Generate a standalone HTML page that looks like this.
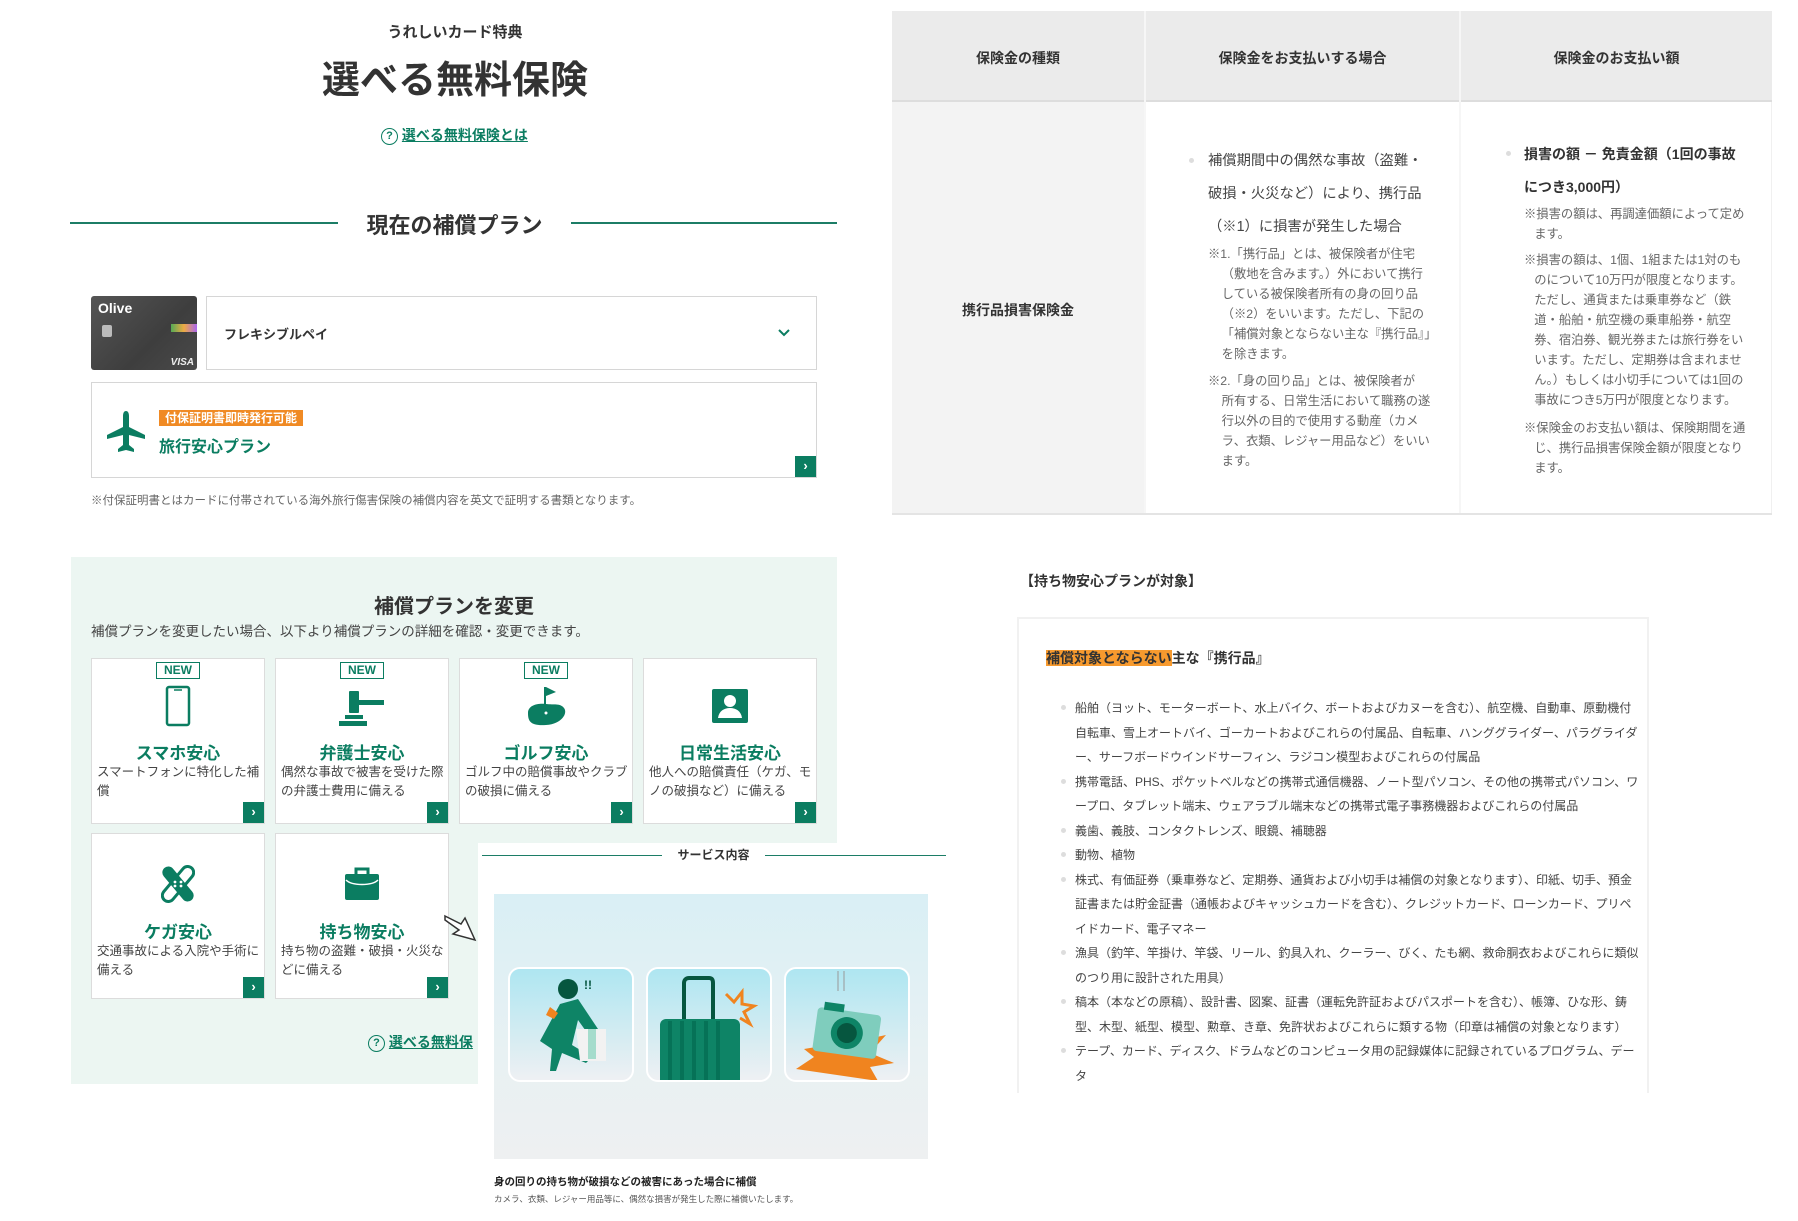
<!DOCTYPE html>
<html><head><meta charset="utf-8">
<style>
*{margin:0;padding:0;box-sizing:border-box}
body{width:1798px;height:1221px;background:#fff;position:relative;overflow:hidden;font-family:"Liberation Sans","Noto Sans CJK JP",sans-serif;color:#333}
.a{position:absolute}
.g{color:#0b7d61}
.c{text-align:center}
.b{font-weight:700}
.card{position:absolute;background:#fff;border:1px solid #dcdcdc}
.card .new{position:absolute;left:50%;margin-left:-22px;top:3px;width:44px;height:17px;border:1.5px solid #0b7d61;color:#0b7d61;font-size:12px;font-weight:700;text-align:center;line-height:14px}
.card .ic{position:absolute;left:0;right:0;top:26px;height:42px;display:flex;justify-content:center}
.card .t{position:absolute;left:0;right:0;top:80px;text-align:center;color:#0b7d61;font-size:17px;font-weight:700}
.card .d{position:absolute;left:5px;right:3px;top:104px;font-size:12.5px;line-height:19px;color:#444}
.arr{position:absolute;right:0;bottom:0;width:21px;height:21px;background:#0b7d61;color:#fff;font-size:13px;font-weight:700;text-align:center;line-height:20px}
.note{position:absolute;font-size:12.3px;line-height:20px;color:#666;white-space:nowrap}
ul.li{list-style:none}
ul.li li{position:relative;font-size:12px;line-height:24.5px;color:#444;white-space:nowrap}
ul.li li:before{content:"";position:absolute;left:-14px;top:9px;width:5px;height:5px;border-radius:50%;background:#ddd}
.dot{position:absolute;width:5px;height:5px;border-radius:50%;background:#ddd}
</style></head><body>

<div class="a c b" style="left:0;width:910px;top:21px;font-size:15px;color:#333">うれしいカード特典</div>
<div class="a c b" style="left:0;width:910px;top:49px;font-size:38px;color:#333">選べる無料保険</div>
<div class="a" style="left:381px;top:125px;font-size:14px;font-weight:700"><span style="display:inline-block;width:17px;height:17px;border:1.5px solid #0b7d61;border-radius:50%;color:#0b7d61;font-size:11px;text-align:center;line-height:14px;vertical-align:middle">?</span> <a class="g" style="text-decoration:underline">選べる無料保険とは</a></div>

<div class="a" style="left:70px;top:222px;width:268px;height:2px;background:#1c7d66"></div>
<div class="a" style="left:571px;top:222px;width:266px;height:2px;background:#1c7d66"></div>
<div class="a c b" style="left:338px;width:233px;top:208px;font-size:22px;color:#333">現在の補償プラン</div>

<div class="a" style="left:91px;top:296px;width:106px;height:74px;border-radius:3px;background:linear-gradient(135deg,#555 0%,#3e3e3e 60%,#4a4a4a 100%)">
 <div class="a b" style="left:7px;top:4px;color:#fff;font-size:14px">Olive</div>
 <div class="a" style="left:11px;top:29px;width:10px;height:12px;background:#bbb;border-radius:2px"></div>
 <div class="a" style="left:80px;top:28px;width:26px;height:8px;background:linear-gradient(90deg,#5a5,#ea4,#a6e)"></div>
 <div class="a b" style="right:3px;bottom:2px;color:#eee;font-size:10px;font-style:italic">VISA</div>
</div>
<div class="a" style="left:206px;top:296px;width:611px;height:74px;border:1px solid #d6d6d6">
 <div class="a b" style="left:17px;top:27px;font-size:13px">フレキシブルペイ</div>
 <svg class="a" style="right:25px;top:31px" width="14" height="10" viewBox="0 0 14 10"><path d="M2 2l5 5 5-5" fill="none" stroke="#0b7d61" stroke-width="2"/></svg>
</div>
<div class="a" style="left:91px;top:382px;width:726px;height:96px;border:1px solid #d6d6d6">
 <svg class="a" style="left:14px;top:28px" width="40" height="44" viewBox="0 0 40 44"><path d="M20 0c2 0 3 2 3 5v11l16 8v4l-16-4v10l5 4v3l-8-2-8 2v-3l5-4V24L1 28v-4l16-8V5c0-3 1-5 3-5z" fill="#0b7d61"/></svg>
 <div class="a b" style="left:67px;top:27px;background:#f08a24;color:#fff;font-size:12px;padding:0 6px;line-height:16px">付保証明書即時発行可能</div>
 <div class="a b g" style="left:67px;top:50px;font-size:16px">旅行安心プラン</div>
 <div class="arr">›</div>
</div>
<div class="a" style="left:91px;top:492px;font-size:11.5px;color:#666">※付保証明書とはカードに付帯されている海外旅行傷害保険の補償内容を英文で証明する書類となります。</div>

<!-- green change section -->
<div class="a" style="left:71px;top:557px;width:766px;height:527px;background:#ecf6f2"></div>
<div class="a c b" style="left:71px;width:766px;top:590px;font-size:20px;color:#333">補償プランを変更</div>
<div class="a" style="left:91px;top:620px;font-size:13.5px;color:#444">補償プランを変更したい場合、以下より補償プランの詳細を確認・変更できます。</div>

<div class="card" style="left:91px;top:658px;width:174px;height:166px"><div class="new">NEW</div><div class="ic"><svg width="26" height="42" viewBox="0 0 26 42"><rect x="2" y="2" width="22" height="38" rx="2" fill="none" stroke="#0b7d61" stroke-width="2.5"/><path d="M9 5h8" stroke="#0b7d61" stroke-width="1.5"/></svg></div><div class="t">スマホ安心</div><div class="d">スマートフォンに特化した補償</div><div class="arr">›</div></div>
<div class="card" style="left:275px;top:658px;width:174px;height:166px"><div class="new">NEW</div><div class="ic"><svg width="46" height="42" viewBox="0 0 46 42"><rect x="10" y="6" width="10" height="22" rx="1" fill="#0b7d61"/><rect x="20" y="15" width="25" height="5" fill="#0b7d61"/><rect x="6" y="30" width="18" height="4" fill="#0b7d61"/><rect x="0" y="36" width="28" height="5" fill="#0b7d61"/></svg></div><div class="t">弁護士安心</div><div class="d">偶然な事故で被害を受けた際の弁護士費用に備える</div><div class="arr">›</div></div>
<div class="card" style="left:459px;top:658px;width:174px;height:166px"><div class="new">NEW</div><div class="ic"><svg width="44" height="42" viewBox="0 0 44 42"><path d="M21 2v18" stroke="#0b7d61" stroke-width="2"/><path d="M22 2l10 5-10 4z" fill="#0b7d61"/><path d="M4 28c0-8 10-10 18-9s14-1 18 4-2 16-18 17S4 36 4 28z" fill="#0b7d61"/><circle cx="22" cy="28" r="1.5" fill="#fff"/></svg></div><div class="t">ゴルフ安心</div><div class="d">ゴルフ中の賠償事故やクラブの破損に備える</div><div class="arr">›</div></div>
<div class="card" style="left:643px;top:658px;width:174px;height:166px"><div class="ic"><svg width="36" height="42" viewBox="0 0 36 42"><rect x="0" y="4" width="36" height="34" rx="2" fill="#0b7d61"/><circle cx="18" cy="16" r="6" fill="#fff"/><path d="M6 33c1-7 6-10 12-10s11 3 12 10z" fill="#fff"/></svg></div><div class="t">日常生活安心</div><div class="d">他人への賠償責任（ケガ、モノの破損など）に備える</div><div class="arr">›</div></div>
<div class="card" style="left:91px;top:833px;width:174px;height:166px"><div class="ic" style="top:30px"><svg width="34" height="40" viewBox="0 0 34 40"><g transform="rotate(40 17 20)"><rect x="11" y="-1" width="12" height="42" rx="6" fill="#fff" stroke="#0b7d61" stroke-width="3"/></g><g transform="rotate(-40 17 20)"><rect x="11" y="-1" width="12" height="42" rx="6" fill="#0b7d61"/></g><circle cx="14" cy="18" r="1.4" fill="#fff"/><circle cx="20" cy="22" r="1.4" fill="#fff"/><circle cx="20" cy="18" r="1.4" fill="#fff"/><circle cx="14" cy="22" r="1.4" fill="#fff"/></svg></div><div class="t" style="top:84px">ケガ安心</div><div class="d" style="top:108px">交通事故による入院や手術に備える</div><div class="arr">›</div></div>
<div class="card" style="left:275px;top:833px;width:174px;height:166px"><div class="ic" style="top:30px"><svg width="36" height="42" viewBox="0 0 36 42"><path d="M12 10V5h12v5" fill="none" stroke="#0b7d61" stroke-width="3"/><rect x="1" y="10" width="34" height="26" rx="2" fill="#0b7d61"/><path d="M2 16c6 6 26 6 32 0" fill="none" stroke="#fff" stroke-width="1.5"/></svg></div><div class="t" style="top:84px">持ち物安心</div><div class="d" style="top:108px">持ち物の盗難・破損・火災などに備える</div><div class="arr">›</div></div>

<svg class="a" style="left:443px;top:910px" width="36" height="34" viewBox="0 0 36 34"><path d="M2 6l16 8 4-6 10 22-22-6 6-4-14-10z" fill="#fff" stroke="#333" stroke-width="1.5"/></svg>

<div class="a" style="left:368px;top:1032px;font-size:14px;font-weight:700"><span style="display:inline-block;width:17px;height:17px;border:1.5px solid #0b7d61;border-radius:50%;color:#0b7d61;font-size:11px;text-align:center;line-height:14px;vertical-align:middle">?</span> <a class="g" style="text-decoration:underline">選べる無料保</a></div>

<!-- service panel -->
<div class="a" style="left:478px;top:843px;width:470px;height:378px;background:#fff"></div>
<div class="a" style="left:482px;top:855px;width:180px;height:1px;background:#1c7d66"></div>
<div class="a" style="left:765px;top:855px;width:181px;height:1px;background:#1c7d66"></div>
<div class="a c b" style="left:662px;width:103px;top:846px;font-size:12px">サービス内容</div>
<div class="a" style="left:494px;top:894px;width:434px;height:265px;background:linear-gradient(180deg,#d9eff5 0%,#e8f1f3 60%,#eef0f1 100%)"></div>
<div class="a" style="left:508px;top:967px;width:126px;height:115px;border:2px solid #fff;border-radius:12px;background:linear-gradient(180deg,#aee6f1,#eef0f3);overflow:hidden">
 <svg width="122" height="111" viewBox="0 0 122 111"><circle cx="58" cy="20" r="10" fill="#06563f"/><path d="M50 35l18-5 20 30-10 5-10-14-6 25 20 12-6 6-24-10-6 18h-6l2-22-12-8z" fill="#0e8466"/><path d="M66 60h30v32H70z" fill="#f2f2f2"/><path d="M78 60h8v30h-8z" fill="#a5dccc"/><path d="M40 38l8 6-4 6-8-4z" fill="#f0841f"/><text x="74" y="20" font-size="12" fill="#06563f" font-weight="700">!!</text></svg>
</div>
<div class="a" style="left:646px;top:967px;width:126px;height:115px;border:2px solid #fff;border-radius:12px;background:linear-gradient(180deg,#aee6f1,#eef0f3);overflow:hidden">
 <svg width="122" height="111" viewBox="0 0 122 111"><path d="M36 50V14c0-3 2-5 5-5h20c3 0 4 2 4 5v36" fill="none" stroke="#06563f" stroke-width="4"/><rect x="12" y="50" width="80" height="70" rx="6" fill="#0e8466"/><path d="M22 52v60M34 52v60M46 52v60M58 52v60M70 52v60" stroke="#067257" stroke-width="4"/><path d="M78 25l8 8 8-10 0 12 12 2-10 6 6 12-10-6" fill="none" stroke="#f0841f" stroke-width="3"/></svg>
</div>
<div class="a" style="left:784px;top:967px;width:126px;height:115px;border:2px solid #fff;border-radius:12px;background:linear-gradient(180deg,#aee6f1,#eef0f3);overflow:hidden">
 <svg width="122" height="111" viewBox="0 0 122 111"><path d="M10 100l18-12-10-8 24-4 20-20 10 16 28-6-16 18 24 10-24 4 8 14z" fill="#f0841f"/><g transform="rotate(8 60 70)"><rect x="28" y="42" width="64" height="44" rx="4" fill="#7fcdbd"/><rect x="34" y="36" width="20" height="8" fill="#0e8466"/><circle cx="60" cy="64" r="16" fill="#0e8466"/><circle cx="60" cy="64" r="10" fill="#06563f"/></g><path d="M52 2v20M58 2v20" stroke="#999" stroke-width="1"/></svg>
</div>
<div class="a b" style="left:494px;top:1174px;font-size:10.5px;color:#222">身の回りの持ち物が破損などの被害にあった場合に補償</div>
<div class="a" style="left:494px;top:1193px;font-size:8.5px;color:#555">カメラ、衣類、レジャー用品等に、偶然な損害が発生した際に補償いたします。</div>

<!-- table -->
<div class="a" style="left:892px;top:11px;width:880px;height:91px;background:#ebebeb;border-bottom:2px solid #ddd"></div>
<div class="a" style="left:892px;top:102px;width:252px;height:412px;background:#f3f3f3"></div>
<div class="a" style="left:1144px;top:11px;width:2px;height:504px;background:#f6f6f6"></div>
<div class="a" style="left:1459px;top:11px;width:2px;height:504px;background:#f6f6f6"></div>
<div class="a" style="left:1771px;top:102px;width:1px;height:412px;background:#f0f0f0"></div>
<div class="a" style="left:892px;top:513px;width:880px;height:2px;background:#e4e4e4"></div>
<div class="a c b" style="left:892px;width:252px;top:48px;font-size:14px">保険金の種類</div>
<div class="a c b" style="left:1146px;width:313px;top:48px;font-size:14px">保険金をお支払いする場合</div>
<div class="a c b" style="left:1461px;width:311px;top:48px;font-size:14px">保険金のお支払い額</div>
<div class="a c b" style="left:892px;width:252px;top:300px;font-size:14px">携行品損害保険金</div>

<div class="dot" style="left:1189px;top:158px"></div>
<div class="a" style="left:1208px;top:145px;font-size:14.3px;line-height:33px;color:#444;white-space:nowrap">補償期間中の偶然な事故（盗難・<br>破損・火災など）により、携行品<br>（※1）に損害が発生した場合</div>
<div class="note" style="left:1208px;top:244px">※1.「携行品」とは、被保険者が住宅<br>&nbsp;&nbsp;&nbsp;&nbsp;（敷地を含みます。）外において携行<br>&nbsp;&nbsp;&nbsp;&nbsp;している被保険者所有の身の回り品<br>&nbsp;&nbsp;&nbsp;&nbsp;（※2）をいいます。ただし、下記の<br>&nbsp;&nbsp;&nbsp;&nbsp;「補償対象とならない主な『携行品』」<br>&nbsp;&nbsp;&nbsp;&nbsp;を除きます。</div>
<div class="note" style="left:1208px;top:371px">※2.「身の回り品」とは、被保険者が<br>&nbsp;&nbsp;&nbsp;&nbsp;所有する、日常生活において職務の遂<br>&nbsp;&nbsp;&nbsp;&nbsp;行以外の目的で使用する動産（カメ<br>&nbsp;&nbsp;&nbsp;&nbsp;ラ、衣類、レジャー用品など）をいい<br>&nbsp;&nbsp;&nbsp;&nbsp;ます。</div>

<div class="dot" style="left:1506px;top:151px"></div>
<div class="a b" style="left:1524px;top:138px;font-size:14px;line-height:33px;color:#333;white-space:nowrap">損害の額 － 免責金額（1回の事故<br>につき3,000円）</div>
<div class="note" style="left:1524px;top:204px">※損害の額は、再調達価額によって定め<br>&nbsp;&nbsp;&nbsp;ます。</div>
<div class="note" style="left:1524px;top:250px">※損害の額は、1個、1組または1対のも<br>&nbsp;&nbsp;&nbsp;のについて10万円が限度となります。<br>&nbsp;&nbsp;&nbsp;ただし、通貨または乗車券など（鉄<br>&nbsp;&nbsp;&nbsp;道・船舶・航空機の乗車船券・航空<br>&nbsp;&nbsp;&nbsp;券、宿泊券、観光券または旅行券をい<br>&nbsp;&nbsp;&nbsp;います。ただし、定期券は含まれませ<br>&nbsp;&nbsp;&nbsp;ん。）もしくは小切手については1回の<br>&nbsp;&nbsp;&nbsp;事故につき5万円が限度となります。</div>
<div class="note" style="left:1524px;top:418px">※保険金のお支払い額は、保険期間を通<br>&nbsp;&nbsp;&nbsp;じ、携行品損害保険金額が限度となり<br>&nbsp;&nbsp;&nbsp;ます。</div>

<div class="a b" style="left:1020px;top:571px;font-size:14px;color:#333">【持ち物安心プランが対象】</div>
<div class="a" style="left:1017px;top:617px;width:632px;height:520px;border:2px solid #f1f1f1;border-bottom:none"></div>
<div class="a b" style="left:1046px;top:648px;font-size:14px;color:#333"><span style="background:#f79a2e">補償対象とならない</span>主な『携行品』</div>
<ul class="li a" style="left:1075px;top:696px">
<li>船舶（ヨット、モーターボート、水上バイク、ボートおよびカヌーを含む）、航空機、自動車、原動機付<br>自転車、雪上オートバイ、ゴーカートおよびこれらの付属品、自転車、ハンググライダー、パラグライダ<br>ー、サーフボードウインドサーフィン、ラジコン模型およびこれらの付属品</li>
<li>携帯電話、PHS、ポケットベルなどの携帯式通信機器、ノート型パソコン、その他の携帯式パソコン、ワ<br>ープロ、タブレット端末、ウェアラブル端末などの携帯式電子事務機器およびこれらの付属品</li>
<li>義歯、義肢、コンタクトレンズ、眼鏡、補聴器</li>
<li>動物、植物</li>
<li>株式、有価証券（乗車券など、定期券、通貨および小切手は補償の対象となります）、印紙、切手、預金<br>証書または貯金証書（通帳およびキャッシュカードを含む）、クレジットカード、ローンカード、プリペ<br>イドカード、電子マネー</li>
<li>漁具（釣竿、竿掛け、竿袋、リール、釣具入れ、クーラー、びく、たも網、救命胴衣およびこれらに類似<br>のつり用に設計された用具）</li>
<li>稿本（本などの原稿）、設計書、図案、証書（運転免許証およびパスポートを含む）、帳簿、ひな形、鋳<br>型、木型、紙型、模型、勲章、き章、免許状およびこれらに類する物（印章は補償の対象となります）</li>
<li>テープ、カード、ディスク、ドラムなどのコンピュータ用の記録媒体に記録されているプログラム、デー<br>タ</li>
</ul>
<div class="a" style="left:1017px;top:1093px;width:640px;height:128px;background:#fff"></div>
</body></html>
